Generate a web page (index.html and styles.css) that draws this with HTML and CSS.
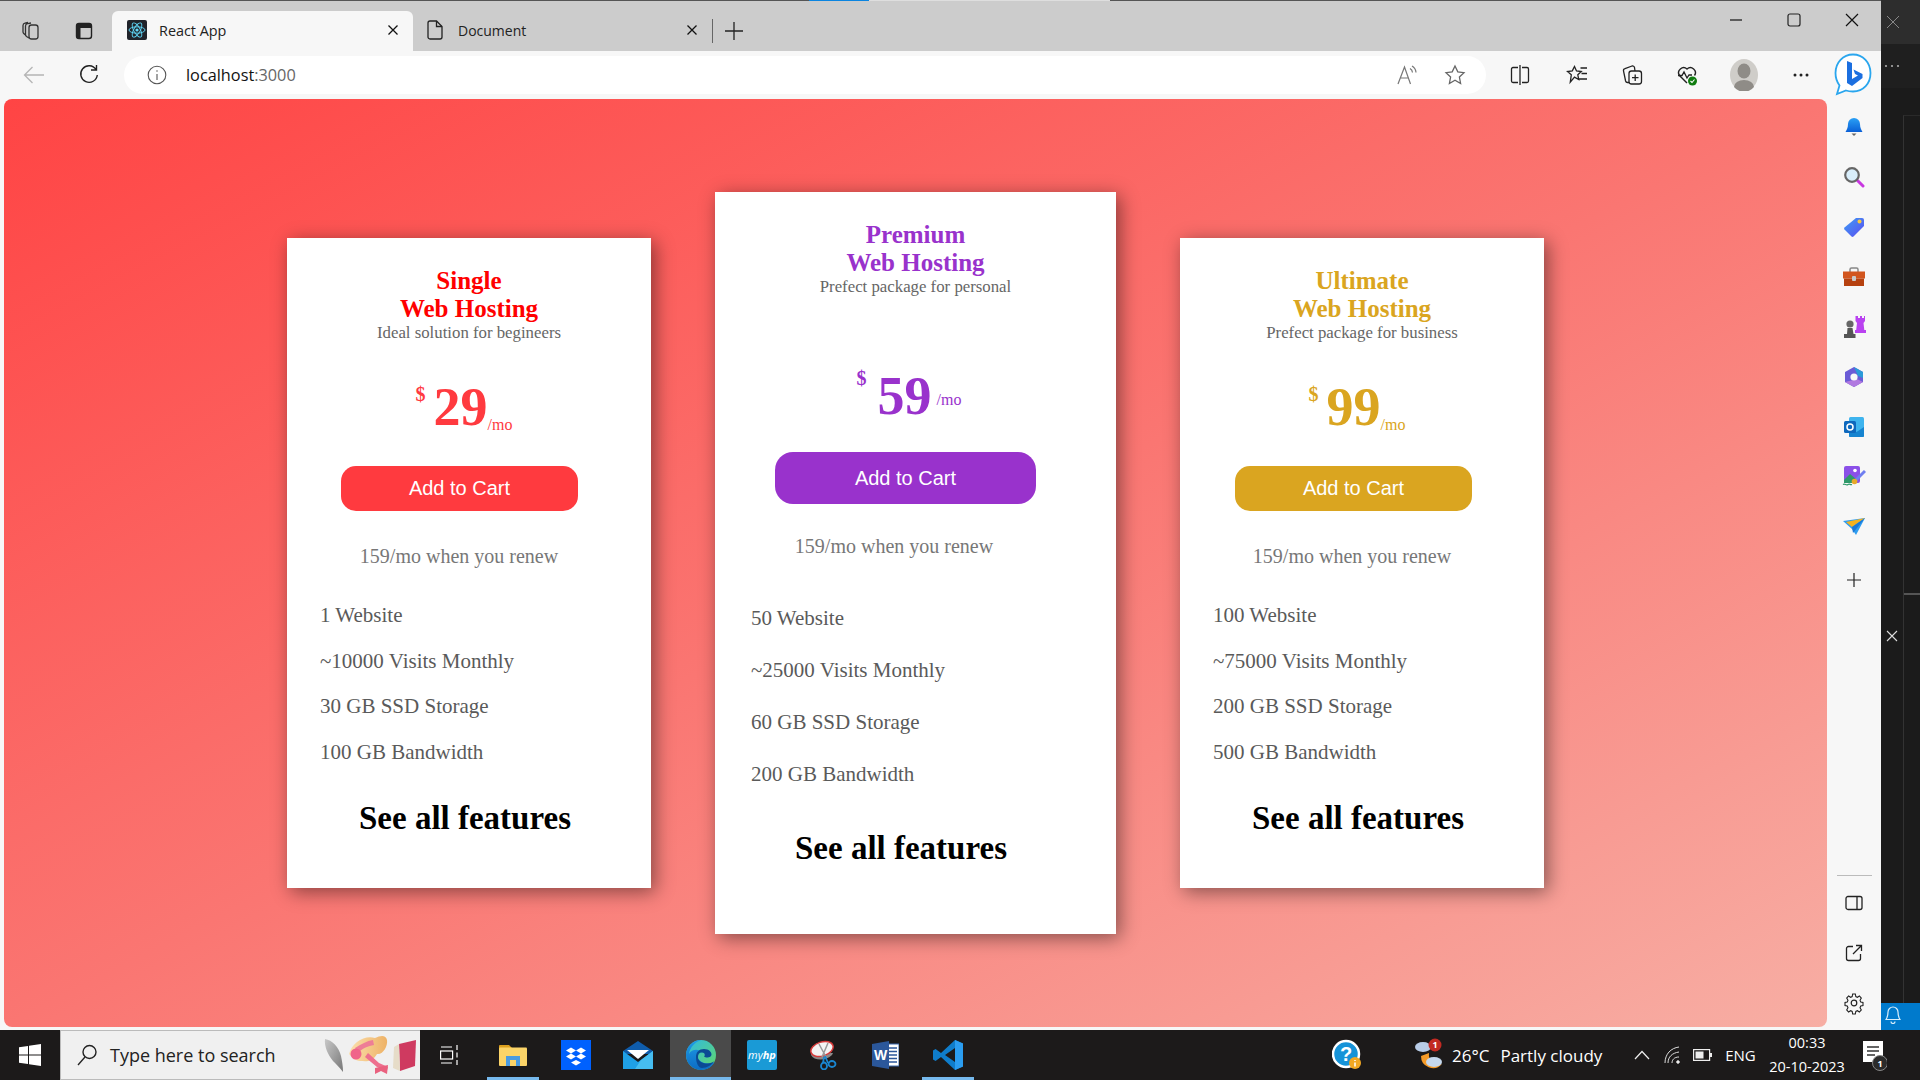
FILE: index.html
```html
<!DOCTYPE html>
<html lang="en">
<head>
<meta charset="utf-8">
<title>React App</title>
<link rel="stylesheet" href="styles.css">
</head>
<body>
<div class="desktop">
  <div class="upper">
    <div class="browser">
      <header class="tabstrip">
        <span class="slot s1"><svg width="22" height="22" viewBox="0 0 22 22" fill="none" stroke="#333" stroke-width="1.3"><rect x="9" y="5" width="9" height="14" rx="2.5"/><path d="M9 18 6.500 16.500A2.500 2.500 0 0 1 5.500 14V6a2.500 2.500 0 0 1 2-2.400L11 3M5.500 15 3.700 13.500A2.500 2.500 0 0 1 3 12V5.500a2.500 2.500 0 0 1 2-2.400L8 2.500"/></svg></span>
        <span class="slot s2"><svg width="20" height="20" viewBox="0 0 20 20"><rect x="2.500" y="2.500" width="15" height="15" rx="2.500" fill="none" stroke="#222" stroke-width="1.400"/><path d="M2.500 5a2.500 2.500 0 0 1 2.500-2.500h10A2.500 2.500 0 0 1 17.500 5v2h-15zM2.500 7h4v10.500H5a2.500 2.500 0 0 1-2.500-2.500z" fill="#222"/></svg></span>
        <div class="tab active">
          <svg class="fav" width="20" height="20" viewBox="0 0 20 20"><rect width="20" height="20" rx="2" fill="#20232a"/><g fill="none" stroke="#61dafb" stroke-width=".9"><ellipse cx="10" cy="10" rx="8" ry="3.200"/><ellipse cx="10" cy="10" rx="8" ry="3.200" transform="rotate(60 10 10)"/><ellipse cx="10" cy="10" rx="8" ry="3.200" transform="rotate(120 10 10)"/></g><circle cx="10" cy="10" r="1.600" fill="#61dafb"/></svg>
          <span class="tab-title">React App</span>
          <svg class="tab-x" width="12" height="12" viewBox="0 0 12 12"><path d="M1.500 1.500l9 9M10.500 1.500l-9 9" stroke="#111" stroke-width="1.300"/></svg>
        </div>
        <div class="tab second">
          <svg class="fav" width="16" height="20" viewBox="0 0 16 20" fill="none" stroke="#222" stroke-width="1.300"><path d="M3 1h6.500L15 6.500V17a2 2 0 0 1-2 2H3a2 2 0 0 1-2-2V3a2 2 0 0 1 2-2z"/><path d="M9.500 1v5.500H15"/></svg>
          <span class="tab-title">Document</span>
          <svg class="tab-x" width="12" height="12" viewBox="0 0 12 12"><path d="M1.500 1.500l9 9M10.500 1.500l-9 9" stroke="#111" stroke-width="1.300"/></svg>
        </div>
        <span class="tabsep"></span>
        <svg class="newtab" width="18" height="18" viewBox="0 0 18 18"><path d="M9 0v18M0 9h18" stroke="#222" stroke-width="1.300"/></svg>
        <div class="wincontrols">
          <svg width="14" height="14" viewBox="0 0 14 14"><path d="M1 7h12" stroke="#111" stroke-width="1.200"/></svg>
          <svg width="14" height="14" viewBox="0 0 14 14"><rect x="1" y="1" width="12" height="12" rx="2" fill="none" stroke="#222" stroke-width="1.200"/></svg>
          <svg width="14" height="14" viewBox="0 0 14 14"><path d="M1 1l12 12M13 1 1 13" stroke="#111" stroke-width="1.200"/></svg>
        </div>
      </header>
      <nav class="toolbar">
        <span class="nav-back"><svg width="22" height="18" viewBox="0 0 22 18" fill="none" stroke="#b5b5b5" stroke-width="1.300"><path d="M21 9H1.500M9.500 1 1.500 9l8 8"/></svg></span>
        <span class="nav-reload"><svg width="22" height="22" viewBox="0 0 22 22" fill="none" stroke="#222" stroke-width="1.400"><path d="M18 5.500A8.300 8.300 0 1 0 19.300 11M18.500 1v5h-5.500"/></svg></span>
        <div class="address">
          <svg width="20" height="20" viewBox="0 0 20 20" fill="none" stroke="#555" stroke-width="1.100"><circle cx="10" cy="10" r="8.800"/><path d="M10 9v6M10 5.200v1.600"/></svg>
          <span class="url">localhost<span class="port">:3000</span></span>
          <span class="address-end">
            <svg width="24" height="22" viewBox="0 0 24 22" fill="none" stroke="#777" stroke-width="1.200"><path d="M2 20 8.500 3l6 17M4.500 14h8"/><path d="M14 4.500a5 5 0 0 1 2.500 4M16 2a8 8 0 0 1 4 6.500"/></svg>
            <svg width="22" height="22" viewBox="0 0 22 22" fill="none" stroke="#666" stroke-width="1.300"><path d="m11 2 2.800 5.900 6.200.8-4.600 4.400 1.200 6.400L11 16.300l-5.600 3.200 1.200-6.400L2 8.700l6.200-.8z"/></svg>
          </span>
        </div>
        <div class="tools">
          <svg width="20" height="20" viewBox="0 0 20 20" fill="none" stroke="#222" stroke-width="1.300"><path d="M8 2.500H3A1.500 1.500 0 0 0 1.500 4v12A1.500 1.500 0 0 0 3 17.500h5M12 2.500h5A1.500 1.500 0 0 1 18.500 4v12a1.500 1.500 0 0 1-1.500 1.500h-5M10 0v20"/></svg>
          <svg width="22" height="22" viewBox="0 0 22 22" fill="none" stroke="#222" stroke-width="1.300"><path d="m8.500 2.500 2 4.400 4.800.6-3.500 3.300.9 4.700-4.200-2.400-4.200 5 1-7.300L1.500 7.500l4.800-.6zM14.500 4H21M15.500 9.500H21M13 15h8"/></svg>
          <svg width="22" height="22" viewBox="0 0 22 22" fill="none" stroke="#222" stroke-width="1.300"><rect x="8" y="7" width="12.500" height="13" rx="2.500"/><path d="M14.200 10.500V17M11 13.700h6.500M8 18.500H6.500A2 2 0 0 1 4.600 17L2.500 7A2 2 0 0 1 4 4.700L11 2a2 2 0 0 1 2.500 1.500L14 7"/></svg>
          <svg width="24" height="24" viewBox="0 0 24 24"><path d="M12 20 4.500 12.500A5 5 0 0 1 12 6a5 5 0 0 1 7.500 6.500" fill="none" stroke="#222" stroke-width="1.400"/><path d="M3 12.500h4l2-3.500 3 6 2-3h3" fill="none" stroke="#222" stroke-width="1.300"/><circle cx="17.500" cy="18" r="4.500" fill="#107c10"/><path d="m15.500 18 1.500 1.500 2.500-3" fill="none" stroke="#fff" stroke-width="1.100"/></svg>
          <svg width="28" height="32" viewBox="0 0 28 32"><ellipse cx="14" cy="16" rx="14" ry="16" fill="#cfcdc9"/><ellipse cx="14" cy="12" rx="6.500" ry="7.500" fill="#8f8c87"/><path d="M4 28a10 7 0 0 1 20 0 14 16 0 0 1-20 0z" fill="#8f8c87"/></svg>
          <svg width="16" height="4" viewBox="0 0 16 4" fill="#222"><circle cx="2" cy="2" r="1.500"/><circle cx="8" cy="2" r="1.500"/><circle cx="14" cy="2" r="1.500"/></svg>
          <svg width="38" height="44" viewBox="0 0 38 44"><path d="M19 1.500C9 1.500 1.500 9.500 1.500 20c0 5 1.500 9 4 12.500L3 41l9-3.500c2 .7 4.500 1 7 1 10.500 0 17.500-8 17.500-18.500S29 1.500 19 1.500z" fill="#fff" stroke="#2aa6ee" stroke-width="1.800"/><path d="M13 8l5 2v16l6-3.500-3-1.500-1.500-4.500 9 4.500v4L18 33l-5-3z" fill="#1b6fe0"/></svg>
        </div>
      </nav>
      <div class="main">
        <main class="content">
          <article class="card red">
            <h2 class="title">Single<br>Web Hosting</h2>
            <p class="desc">Ideal solution for begineers</p>
            <p class="price"><span class="cur">$</span><span class="amount">29</span><span class="per">/mo</span></p>
            <button class="cart">Add to Cart</button>
            <p class="renew">159/mo when you renew</p>
            <ul class="features">
              <li>1 Website</li>
              <li>~10000 Visits Monthly</li>
              <li>30 GB SSD Storage</li>
              <li>100 GB Bandwidth</li>
            </ul>
            <h3 class="all">See all features</h3>
          </article>
          <article class="card purple big">
            <h2 class="title">Premium<br>Web Hosting</h2>
            <p class="desc">Prefect package for personal</p>
            <p class="price"><span class="cur">$</span><span class="amount">59</span><span class="per">/mo</span></p>
            <button class="cart">Add to Cart</button>
            <p class="renew">159/mo when you renew</p>
            <ul class="features">
              <li>50 Website</li>
              <li>~25000 Visits Monthly</li>
              <li>60 GB SSD Storage</li>
              <li>200 GB Bandwidth</li>
            </ul>
            <h3 class="all">See all features</h3>
          </article>
          <article class="card gold">
            <h2 class="title">Ultimate<br>Web Hosting</h2>
            <p class="desc">Prefect package for business</p>
            <p class="price"><span class="cur">$</span><span class="amount">99</span><span class="per">/mo</span></p>
            <button class="cart">Add to Cart</button>
            <p class="renew">159/mo when you renew</p>
            <ul class="features">
              <li>100 Website</li>
              <li>~75000 Visits Monthly</li>
              <li>200 GB SSD Storage</li>
              <li>500 GB Bandwidth</li>
            </ul>
            <h3 class="all">See all features</h3>
          </article>
        </main>
        <aside class="sidebar">
          <svg width="20" height="20" viewBox="0 0 20 20"><defs><linearGradient id="gb" x1="0" y1="0" x2="0" y2="1"><stop offset="0" stop-color="#2aa0f5"/><stop offset="1" stop-color="#0a5fd6"/></linearGradient></defs><path d="M10 1a6 6 0 0 1 6 6c0 4 1.500 6 2.500 8h-17C2.500 13 4 11 4 7a6 6 0 0 1 6-6z" fill="url(#gb)"/><path d="M7.500 16.500h5L10 19z" fill="#666"/></svg>
          <svg width="22" height="22" viewBox="0 0 22 22"><path d="m13 13 7 7" stroke="#c837e0" stroke-width="3" stroke-linecap="round"/><circle cx="9" cy="9" r="6.800" fill="#d9eefb" stroke="#666" stroke-width="2.200"/></svg>
          <svg width="22" height="22" viewBox="0 0 22 22"><defs><linearGradient id="gt" x1="0" y1="0" x2="1" y2="1"><stop offset="0" stop-color="#3d9df5"/><stop offset="1" stop-color="#5b4cf0"/></linearGradient></defs><path d="M13 2h6a2 2 0 0 1 2 2v6L10.500 20.500a1.500 1.500 0 0 1-2 0l-7-7a1.500 1.500 0 0 1 0-2z" fill="url(#gt)"/><circle cx="16.500" cy="5.500" r="2" fill="#f5c842"/></svg>
          <svg width="24" height="20" viewBox="0 0 24 20"><path d="M8 5V2.500A1.500 1.500 0 0 1 9.500 1h5A1.500 1.500 0 0 1 16 2.500V5" fill="none" stroke="#888" stroke-width="1.500"/><rect x="1" y="4.500" width="22" height="7" fill="#d2551e"/><rect x="2" y="11.500" width="20" height="7.500" fill="#b6410f"/><rect x="10" y="9" width="4" height="5" rx="1" fill="#c9c9c9"/></svg>
          <svg width="24" height="24" viewBox="0 0 24 24"><path d="M14 1h2v2h2V1h2v2h2V1h1v5l-1.500 2 .8 7H24v3H13v-3h1.200l.8-7-1.500-2V1z" fill="#b942f0"/><circle cx="8" cy="9" r="3.600" fill="#666"/><path d="M5.500 13h5l1 6h2v4H2v-4h3z" fill="#555"/></svg>
          <svg width="22" height="22" viewBox="0 0 22 22"><path d="M11 1l9 5v10l-9 5-9-5V6z" fill="#6a5bd6"/><path d="M11 1l9 5v6l-5-2z" fill="#2a9ad8"/><path d="M2 16l9 5 9-5-6-3z" fill="#b179e0"/><circle cx="11" cy="11" r="3.600" fill="#f7f7f7"/></svg>
          <svg width="22" height="22" viewBox="0 0 22 22"><rect x="6" y="1" width="15" height="20" rx="1.500" fill="#3fb4ee"/><path d="M6 11l7.500 5 7.500-5v9a1 1 0 0 1-1 1H7a1 1 0 0 1-1-1z" fill="#1684d0"/><rect x="1" y="5" width="12" height="12" rx="1.500" fill="#0e68bd"/><circle cx="7" cy="11" r="3" fill="none" stroke="#fff" stroke-width="1.500"/></svg>
          <svg width="24" height="24" viewBox="0 0 24 24"><rect x="2" y="1" width="16" height="17" rx="2" fill="#8b50e8"/><path d="M2 15l6-6 6 5v4H2z" fill="#2f9a6a"/><circle cx="13" cy="5.500" r="1.800" fill="#fff"/><path d="M23 6l-9 9" stroke="#6f7ef0" stroke-width="3"/><circle cx="12.500" cy="16.500" r="2.800" fill="#e8a92a"/><path d="M1 19.500c2-1.500 3 1.500 5 0s2 1 4 0" fill="none" stroke="#2f9a6a" stroke-width="1.300"/></svg>
          <svg width="22" height="18" viewBox="0 0 22 18"><path d="M0 3 22 0 13 17 9 11z" fill="#2f9df0"/><path d="M3 4 22 0 9 9z" fill="#f5b21f"/><path d="M9 9 22 0 10 15z" fill="#1a78d8"/></svg>
          <svg class="side-plus" width="14" height="14" viewBox="0 0 14 14"><path d="M7 0v14M0 7h14" stroke="#222" stroke-width="1.200"/></svg>
          <span class="side-rule"></span>
          <svg width="18" height="18" viewBox="0 0 18 18" fill="none" stroke="#222" stroke-width="1.300"><rect x="1" y="2.500" width="16" height="13" rx="2"/><path d="M12 2.500v13"/></svg>
          <svg width="18" height="18" viewBox="0 0 18 18" fill="none" stroke="#222" stroke-width="1.300"><path d="M8 2.500H3.500a2 2 0 0 0-2 2v10a2 2 0 0 0 2 2h10a2 2 0 0 0 2-2V10M8 10l8.500-8.500M11 1.500h5.500V7"/></svg>
          <svg width="20" height="20" viewBox="0 0 20 20" fill="none" stroke="#222" stroke-width="1.200"><path d="M8.500 1h3l.5 2.500 1.800.8 2.200-1.400 2.100 2.100-1.400 2.200.8 1.800 2.500.5v3l-2.500.5-.8 1.800 1.400 2.200-2.100 2.100-2.200-1.400-1.800.8-.5 2.500h-3l-.5-2.500-1.800-.8-2.200 1.400-2.100-2.100 1.400-2.200-.8-1.800-2.500-.5v-3l2.500-.5.8-1.800-1.400-2.200 2.100-2.100 2.200 1.400 1.800-.8z" transform="translate(1 0) scale(.9 1)"/><circle cx="10" cy="10" r="2.800"/></svg>
        </aside>
      </div>
    </div>
    <div class="strip">
      <div class="strip-close"><svg width="14" height="14" viewBox="0 0 14 14"><path d="M1 1l12 12M13 1 1 13" stroke="#888" stroke-width="1"/></svg></div>
      <div class="strip-menu"><svg width="16" height="4" viewBox="0 0 16 4" fill="#aaa"><circle cx="2" cy="2" r="1.100"/><circle cx="8" cy="2" r="1.100"/><circle cx="14" cy="2" r="1.100"/></svg></div>
      <div class="strip-body">
        <div class="strip-left"><svg width="12" height="12" viewBox="0 0 12 12"><path d="M1 1l10 10M11 1 1 11" stroke="#ddd" stroke-width="1.100"/></svg></div>
        <div class="strip-panel"><span class="strip-rule"></span></div>
      </div>
      <div class="strip-bell"><svg width="16" height="18" viewBox="0 0 16 18" fill="none" stroke="#d8eefb" stroke-width="1.200"><path d="M8 1a5 5 0 0 1 5 5c0 4 1 6 2 7.500H1C2 12 3 10 3 6a5 5 0 0 1 5-5zM6 15.500a2 2 0 0 0 4 0"/></svg></div>
    </div>
  </div>
  <footer class="taskbar">
    <span class="tb"><svg width="22" height="22" viewBox="0 0 22 22" fill="#fff"><path d="M0 3.200 9 2v8.500H0zM10 1.800 22 0v10.500H10zM0 11.500h9V20L0 18.800zM10 11.500h12V22l-12-1.800z"/></svg></span>
    <div class="search">
      <svg width="24" height="24" viewBox="0 0 24 24" fill="none" stroke="#222" stroke-width="1.400"><circle cx="14.500" cy="9" r="6.500"/><path d="M10 14l-7 8"/></svg>
      <span class="search-text">Type here to search</span>
      <svg class="doodle" width="100" height="48" viewBox="0 1 100 48"><defs><linearGradient id="gf" x1="0" y1="0" x2="1" y2="1"><stop offset="0" stop-color="#c8c8c8"/><stop offset="1" stop-color="#777"/></linearGradient><linearGradient id="gh" x1="0" y1="0" x2="1" y2="0"><stop offset="0" stop-color="#fbe0ae"/><stop offset="1" stop-color="#eeb266"/></linearGradient></defs><path d="M5 9c7 1 14 8 16 17 1 5 2 10 2 16-4-5-7-8-10-11C8 25 4 16 5 9z" fill="url(#gf)"/><path d="M29 24C32 13 44 5 55 8c6-3 11-3 12 2 1 6-4 15-10 14-5 9-12 7-17 7-5 0-8-4-11-7z" fill="url(#gh)"/><path d="M35 18c6-4 12-7 18-8l1 5c-6 1-11 3-16 8z" fill="#ee7e96"/><circle cx="36" cy="24" r="5.500" fill="#f0648a"/><path d="M48 23l11 10 9 4-1 3-10-3-12-10z" fill="#ee6f8e"/><path d="M55 38l13-3-1 9-6-3-6 3z" fill="#e9617f"/><path d="M79 14l17-4-1 26-15 5z" fill="#cf3a60"/><path d="M74 17l5-3 1 27-7-3z" fill="#e6dcc8"/></svg>
    </div>
    <span class="tb"><svg width="20" height="22" viewBox="0 0 20 22" fill="none" stroke="#fff" stroke-width="1.200"><rect x=".6" y="7" width="12" height="8"/><path d="M1 3h11M1 19h11M17 1v5M17 8.500v5M17 16v5"/></svg></span>
    <span class="tb on"><svg width="28" height="22" viewBox="0 0 28 22"><path d="M0 2a1 1 0 0 1 1-1h9l3 3v3H0z" fill="#dca01e"/><rect y="3.500" width="28" height="18.500" rx="1" fill="#fbd468"/><path d="M7 12h14v10h-4v-6h-6v6H7z" fill="#4a9be0"/></svg></span>
    <span class="tb"><svg width="30" height="30" viewBox="0 0 30 30"><rect width="30" height="30" fill="#0061fe"/><path d="M10 7.500l5 3-5 3-5-3zM20 7.500l5 3-5 3-5-3zM10 13.500l5 3-5 3-5-3zM20 13.500l5 3-5 3-5-3zM15 20l5 2.500-5 3-5-3z" fill="#fff"/></svg></span>
    <span class="tb"><svg width="30" height="28" viewBox="0 0 30 28"><path d="M15 0l15 10v3H0v-3z" fill="#0f5cab"/><path d="M4 9h22l-11 9z" fill="#fff"/><path d="M0 10l15 11 15-11v18H0z" fill="#1fa0e6"/><path d="M30 10v18H12l6-9z" fill="#46bdf0"/></svg></span>
    <span class="tb active"><svg width="30" height="30" viewBox="0 0 30 30"><defs><linearGradient id="ge" x1="0" y1="0" x2="0" y2="1"><stop offset="0" stop-color="#1f9be6"/><stop offset="1" stop-color="#0c6cc4"/></linearGradient><linearGradient id="ge2" x1="0" y1="0" x2="1" y2="1"><stop offset="0" stop-color="#2fb8e4"/><stop offset="1" stop-color="#62d86a"/></linearGradient></defs><circle cx="15" cy="15" r="15" fill="url(#ge2)"/><path d="M15 0C7 0 0 7 0 15c0 8.300 6.700 15 15 15 6 0 11-3 13.500-8-2 1-4 1.500-6.500 1.500-5 0-11-3-11-8.500 0-2 1-3.500 2.500-4.500C10 9 5 10 3 14 4 7 9 2 15 0z" fill="url(#ge)"/><path d="M10 17c0-5 3-8 8-8 5 0 7.500 3 7.500 5.500 0 2-2 3-4 3-1.500 0-3-.5-3.500-1 1.500-1 1-4-2-4s-4 2-4 4.500c0 4 4 6.500 9 6.500 3 0 6-1 7-2.500-2 4-7 7-12 7-3.500 0-6-5-6-11z" fill="#0b4a94"/></svg></span>
    <span class="tb"><svg width="30" height="30" viewBox="0 0 30 30"><rect width="30" height="30" rx="2" fill="#1a9ad6"/><text x="15" y="19" text-anchor="middle" class="myhp">my<tspan class="myhp-b">hp</tspan></text></svg></span>
    <span class="tb"><svg width="28" height="30" viewBox="0 0 28 30"><path d="M1 15c3 6 15 6 21 0l1-2H1z" fill="#8a8a8a"/><ellipse cx="12" cy="9" rx="11.500" ry="7" transform="rotate(-18 12 9)" fill="#f4f4f4" stroke="#d63a3a" stroke-width="1.500"/><path d="M9 4l7 13M18 3 12 17" stroke="#999" stroke-width="1.500"/><path d="M15 16l3 7M14 17l-1 6" stroke="#1a86d0" stroke-width="1.800"/><ellipse cx="14" cy="26" rx="3" ry="3.500" fill="none" stroke="#1a86d0" stroke-width="1.800"/><ellipse cx="22" cy="24" rx="3.500" ry="3" fill="none" stroke="#1a86d0" stroke-width="1.800"/></svg></span>
    <span class="tb"><svg width="27" height="28" viewBox="0 0 27 28"><rect x="12" y="3" width="15" height="22" fill="#fff" stroke="#3a69ad"/><path d="M16 7h9M16 10.500h9M16 14h9M16 17.500h9M16 21h9" stroke="#2b579a" stroke-width="1.500"/><path d="M0 3 17 0v28L0 25z" fill="#2b579a"/><text x="8.500" y="19" text-anchor="middle" class="wordw">W</text></svg></span>
    <span class="tb on"><svg width="30" height="30" viewBox="0 0 30 30"><path d="M22 0l8 3.600v22.800L22 30 8 17l-5.400 4L0 19.500v-9L2.600 9 8 13zM22 8l-10 7 10 7z" fill="#0f7dcb" fill-rule="evenodd"/><path d="M22 0l8 3.600v22.800L22 30z" fill="#2b9df0"/></svg></span>
    <span class="spacer"></span>
    <span class="tb"><svg width="30" height="34" viewBox="0 0 30 34"><circle cx="14" cy="16" r="13" fill="#1693d8" stroke="#fff" stroke-width="2.500"/><text x="14" y="23" text-anchor="middle" class="help">?</text><circle cx="23" cy="25" r="6" fill="#f2a823"/><path d="M23 22v1M23 24.500v4" stroke="#fff" stroke-width="1.500"/></svg></span>
    <span class="weather"><svg width="30" height="34" viewBox="0 0 30 34"><path d="M7 18a12 12 0 0 0 21 8 10 10 0 0 1-13-11z" fill="#f59b28"/><ellipse cx="9" cy="9" rx="8" ry="5" fill="#b9cde8"/><ellipse cx="20" cy="24" rx="8" ry="5" fill="#c5d8ee"/><circle cx="21" cy="7" r="6.500" fill="#c22a22"/><text x="21" y="10" text-anchor="middle" class="badge">1</text></svg><span>26°C</span><span class="cond">Partly cloudy</span></span>
    <span class="tb"><svg width="16" height="10" viewBox="0 0 16 10" fill="none" stroke="#eee" stroke-width="1.200"><path d="m1 9 7-7.500L15 9"/></svg></span>
    <span class="tb"><svg width="16" height="18" viewBox="0 0 16 18" fill="none" stroke="#ddd" stroke-width="1"><path d="M1 17C1 8 7 2 15 1M4 17c0-6 4-10 11-11M8 17c0-3 2-6 7-6"/><circle cx="14" cy="16" r="1.300" fill="#fff"/></svg></span>
    <span class="tb"><svg width="19" height="12" viewBox="0 0 19 12"><rect x=".6" y=".6" width="16" height="10.800" fill="none" stroke="#eee" stroke-width="1.200"/><rect x="2.500" y="2.500" width="8" height="7" fill="#eee"/><rect x="17" y="4" width="2" height="4" fill="#eee"/></svg></span>
    <span class="eng">ENG</span>
    <span class="clock"><span>00:33</span><span>20-10-2023</span></span>
    <span class="tb notif"><svg width="26" height="32" viewBox="0 0 26 32"><path d="M2 2h20v21H2z" fill="#fff"/><path d="M6 8h12M6 12h12M6 16h8" stroke="#333" stroke-width="1.300"/><circle cx="19" cy="24" r="7.500" fill="#2b2b2b" stroke="#888"/><text x="19" y="28" text-anchor="middle" class="badge">1</text></svg></span>
    <span></span>
  </footer>
</div>
</body>
</html>
```

FILE: styles.css
```css
* { box-sizing: border-box; }
html, body { margin: 0; padding: 0; }
body { width: 1920px; height: 1080px; overflow: hidden; font-family: "Open Sans", sans-serif; }
svg { display: block; flex: none; }

.desktop { display: flex; flex-direction: column; height: 1080px; }
.upper { display: flex; height: 1030px; }
.browser { width: 1881px; display: flex; flex-direction: column; background: #f7f7f7; }

/* tab strip */
.tabstrip { height: 51px; display: flex; align-items: center; padding-left: 20px; background: linear-gradient(to right, #555 809px, #0a84e0 809px, #0a84e0 869px, #dedede 869px, #dedede 1110px, #555 1110px) top / 100% 1px no-repeat, #cccccc; }
.slot { width: 22px; height: 22px; display: flex; align-items: center; justify-content: center; margin-top: 10px; }
.s2 { margin-left: 31px; }
.tab { height: 40px; align-self: flex-end; display: flex; align-items: center; font-size: 14px; color: #222; padding-bottom: 2px; }
.tab.active { width: 301px; margin-left: 17px; background: #f7f7f7; border-radius: 6px 6px 0 0; padding-left: 15px; padding-right: 14px; }
.tab.second { width: 299px; padding-left: 14px; padding-right: 14px; }
.tab.second .tab-title { margin-left: 15px; }
.tab-title { margin-left: 12px; }
.active .tab-title { font-size: 14.4px; }
.tab-x { margin-left: auto; }
.tabsep { width: 1px; height: 24px; background: #666; margin-top: 10px; }
.newtab { margin: 10px 0 0 12px; }
.wincontrols { margin-left: auto; display: grid; grid-template-columns: 58px 58px 58px; width: 174px; justify-items: center; align-self: flex-start; padding-top: 13px; }

/* toolbar */
.toolbar { height: 48px; display: flex; align-items: center; padding-left: 23px; }
.nav-back { width: 22px; }
.nav-reload { width: 22px; margin-left: 33px; }
.address { width: 1362px; height: 38px; margin-left: 24px; background: #fff; border-radius: 19px; display: flex; align-items: center; padding: 0 20px 0 23px; }
.url { margin-left: 19px; font-size: 16.3px; color: #111; }
.port { color: #666; }
.address-end { margin-left: auto; display: flex; align-items: center; gap: 24px; }
.tools { margin-left: 6px; display: grid; grid-template-columns: 56px 58px 52px 58px 56px 58px 46px; justify-items: center; align-items: center; }

/* page */
.main { flex: 1; display: flex; min-height: 0; }
.content { width: 1823px; margin: 0 0 3px 4px; border-radius: 8px; background: linear-gradient(to bottom right, #ff4444, #fa7672 50%, #f7aea4); display: flex; justify-content: center; align-items: center; gap: 64px; font-family: "Liberation Serif", serif; }
.card { width: 364px; height: 650px; background: #fff; box-shadow: 4px 4px 18px rgba(0, 0, 0, .45); padding-top: 29px; display: flex; flex-direction: column; }
.card.big { width: 401px; height: 742px; }
.title { margin: 0; font-size: 25px; line-height: 28px; font-weight: 700; text-align: center; }
.desc { margin: 1px 0 0; font-size: 16.8px; line-height: 18px; text-align: center; color: #666; }
.price { margin: 35px 0 0; height: 60px; padding-right: 10px; font-size: 54px; line-height: 60px; font-weight: 700; text-align: center; white-space: nowrap; }
.cur { font-size: 20px; line-height: 20px; vertical-align: 24px; margin-right: 8px; }
.per { font-size: 16px; line-height: 16px; font-weight: 400; vertical-align: -5px; }
.cart { margin: 29px 0 0 54px; width: 237px; height: 45px; border: 0; border-radius: 15px; color: #fff; font-family: "Liberation Sans", sans-serif; font-size: 20px; padding: 0; }
.renew { margin: 33px 0 0; padding-right: 20px; font-size: 20px; line-height: 24px; color: #777; text-align: center; }
.features { list-style: none; margin: 35px 0 0; padding: 0 0 0 33px; display: flex; flex-direction: column; gap: 21.6px; font-size: 21px; line-height: 24px; color: #5a5a5a; }
.all { margin: 36px 0 0; padding-right: 8px; font-size: 33px; line-height: 37px; font-weight: 700; color: #000; text-align: center; }

.big .price { margin-top: 70px; padding-right: 13px; }
.big .cur { vertical-align: 29px; margin-right: 11px; }
.big .per { vertical-align: 9px; margin-left: 5px; }
.big .cart { margin: 26px 0 0 60px; width: 261px; height: 52px; border-radius: 18px; }
.big .renew { margin-top: 30px; padding-right: 43px; }
.big .features { margin-top: 48px; padding-left: 36px; gap: 28px; }
.big .all { margin-top: 44px; padding-right: 29px; }

.red .title { color: #ff0000; }
.red .price { color: #ff3a3f; }
.red .cart { background: #ff3a3f; }
.purple .title, .purple .price { color: #9932cc; }
.purple .cart { background: #9932cc; }
.gold .title, .gold .price { color: #daa520; }
.gold .cart { background: #daa520; margin-left: 55px; }

/* edge sidebar */
.sidebar { width: 54px; display: flex; flex-direction: column; align-items: center; padding: 16px 0 15px; }
.sidebar svg { height: 24px; margin-bottom: 26px; }
.sidebar .side-plus { margin: 3px 0 0; }
.sidebar svg:last-child { margin-bottom: 0; }
.side-rule { width: 35px; height: 1px; background: #bbb; margin: auto 0 15px; }

/* dark strip on the right */
.strip { width: 39px; background: #1b1b1b; display: flex; flex-direction: column; }
.strip-close { height: 44px; background: #2d2d2d; display: flex; align-items: center; padding-left: 5px; }
.strip-menu { height: 44px; background: #1f1f1f; display: flex; align-items: center; padding-left: 3px; }
.strip-body { flex: 1; display: flex; padding-top: 27px; }
.strip-left { width: 22px; padding: 515px 0 0 5px; }
.strip-panel { flex: 1; border-left: 1px solid #333; border-top: 1px solid #2a2a2a; padding-top: 477px; }
.strip-rule { display: block; height: 2px; background: #555; }
.strip-bell { height: 27px; background: #007acc; padding: 3px 0 0 4px; overflow: hidden; }

/* taskbar */
.taskbar { height: 50px; background: #1c1a1a; display: grid; grid-template-columns: 60px 360px 60px 66px 60px 64px 61px 62px 62px 60px 66px 1fr 40px 258px 34px 26px 35px 41px 92px 41px 26px; align-items: stretch; color: #fff; }
.tb { position: relative; display: flex; align-items: center; justify-content: center; }
.tb.on::after { content: ""; position: absolute; left: 50%; margin-left: -26px; width: 52px; bottom: 0; height: 3px; background: #76b9ed; }
.tb.active { background: #4a4a4a; box-shadow: inset 0 -3px #76b9ed; }
.search { background: #f0f0f0; border: 1px solid #bbb; border-width: 1px 0 1px 1px; display: flex; align-items: center; padding-left: 14px; color: #222; font-size: 18px; }
.search-text { margin-left: 11px; }
.doodle { margin-left: auto; }
.spacer { display: block; }
.weather { display: flex; align-items: center; font-size: 17px; padding-left: 47px; gap: 8px; }
.weather .cond { margin-left: 3px; }
.eng { align-self: center; font-size: 15px; text-align: center; }
.clock { display: flex; flex-direction: column; align-items: center; justify-content: center; font-size: 14.5px; line-height: 24px; }
.myhp { font: italic 400 11px "Open Sans", sans-serif; fill: #fff; }
.myhp-b { font-weight: 700; }
.wordw { font: 700 14px "Liberation Sans", sans-serif; fill: #fff; }
.help { font: 700 20px "Liberation Sans", sans-serif; fill: #fff; }
.badge { font: 700 9px "Open Sans", sans-serif; fill: #fff; }
```
